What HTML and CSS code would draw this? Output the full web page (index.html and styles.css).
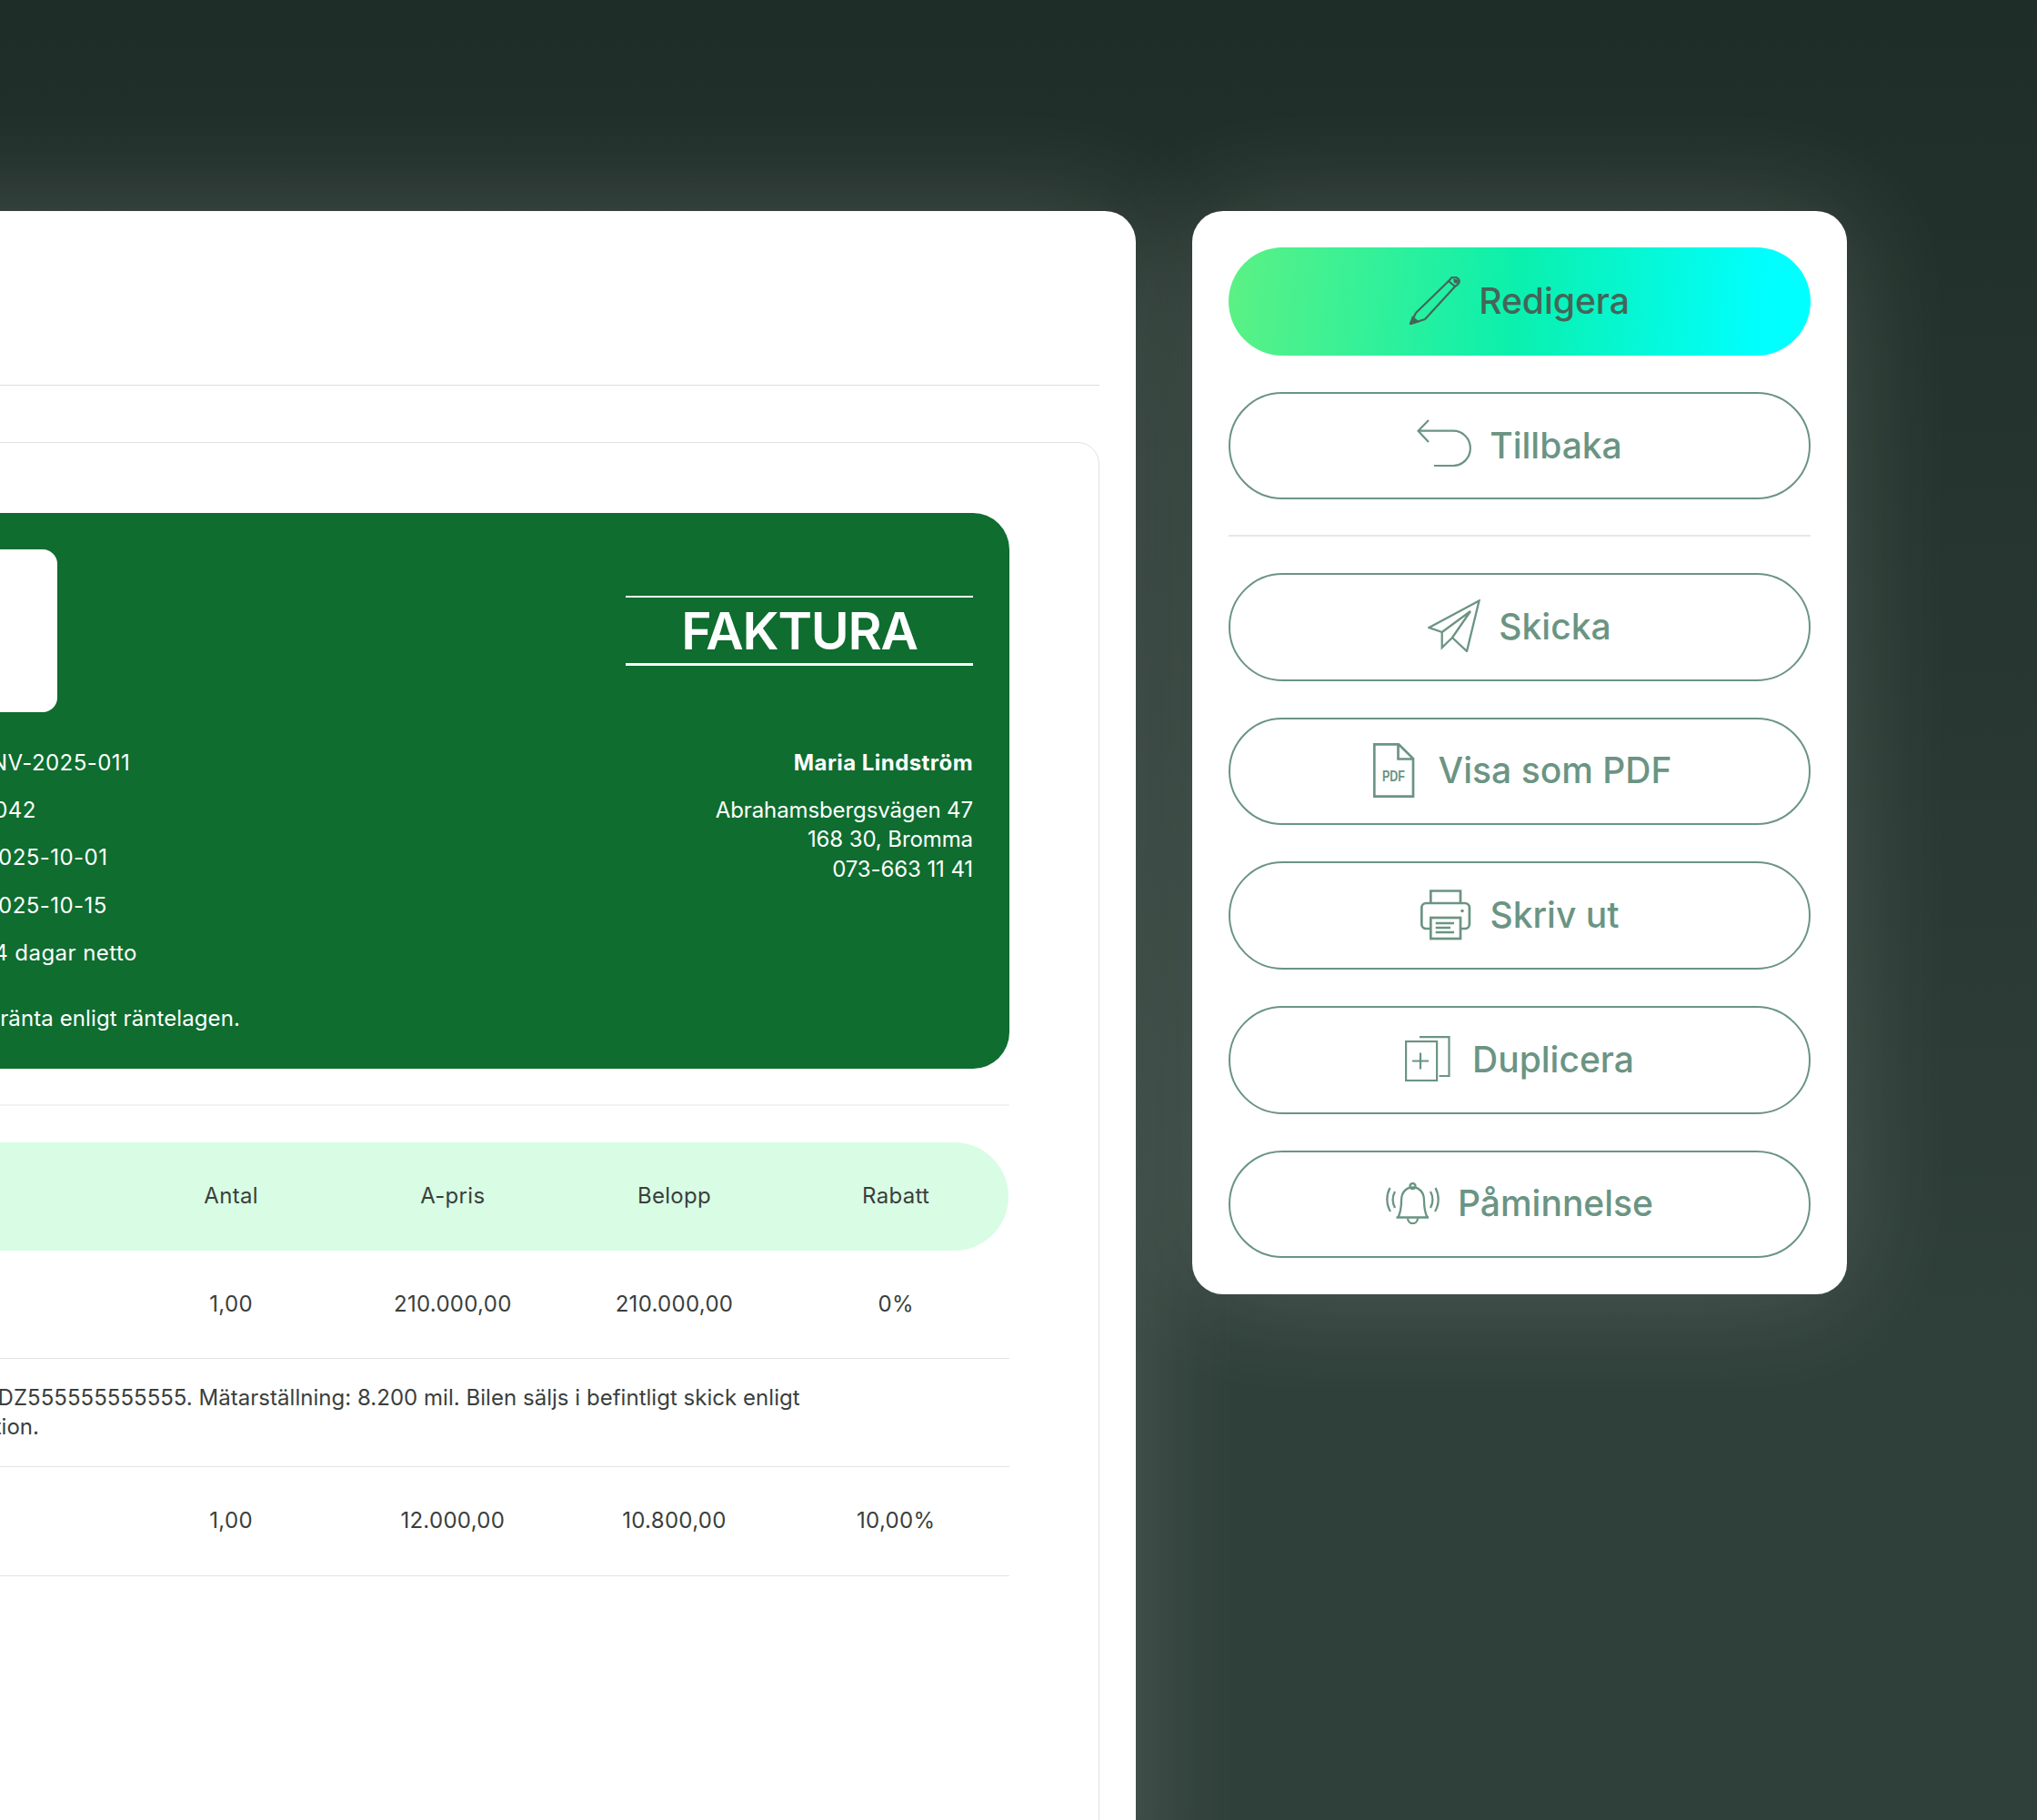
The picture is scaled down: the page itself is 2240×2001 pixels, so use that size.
FILE: index.html
```html
<!DOCTYPE html>
<html lang="sv">
<head>
<meta charset="utf-8">
<title>Faktura</title>
<link rel="stylesheet" href="styles.css">
</head>
<body>
<div class="page">
  <main class="main-card">
    <div class="main-head"></div>
    <section class="doc">
      <div class="banner">
        <div class="banner-top">
          <div class="logo"></div>
          <h1 class="title">FAKTURA</h1>
        </div>
        <div class="banner-body">
          <div class="meta">
            <div class="meta-row"><span class="meta-label">Fakturanr</span><span>INV-2025-011</span></div>
            <div class="meta-row"><span class="meta-label">Kundnr</span><span>1042</span></div>
            <div class="meta-row"><span class="meta-label">Datum</span><span>2025-10-01</span></div>
            <div class="meta-row"><span class="meta-label">Förfallo</span><span>2025-10-15</span></div>
            <div class="meta-row"><span class="meta-label">Villkor</span><span>14 dagar netto</span></div>
            <div class="meta-row meta-note"><span>Dröjsmålsränta enligt räntelagen.</span></div>
          </div>
          <address class="customer">
            <strong class="customer-name">Maria Lindström</strong>
            <span>Abrahamsbergsvägen 47</span>
            <span>168 30, Bromma</span>
            <span>073-663 11 41</span>
          </address>
        </div>
      </div>
      <div class="rule"></div>
      <div class="table">
        <div class="row row-head"><span></span><span>Antal</span><span>A-pris</span><span>Belopp</span><span>Rabatt</span></div>
        <div class="row"><span></span><span>1,00</span><span>210.000,00</span><span>210.000,00</span><span>0%</span></div>
        <div class="row-desc"><p>VIN: WDZ555555555555. Mätarställning: 8.200 mil. Bilen säljs i befintligt skick enligt<br>inspektion.</p></div>
        <div class="row"><span></span><span>1,00</span><span>12.000,00</span><span>10.800,00</span><span>10,00%</span></div>
      </div>
    </section>
  </main>

  <aside class="actions">
    <button class="btn btn-primary" type="button">
      <svg class="ico ico-pencil" viewBox="0 0 56 53" fill="none" stroke="currentColor" stroke-width="2.200"><path d="M7 40 43 5M17 47 50 11M7 40 1 52 17 47"/><path d="M1 52 3.500 45 9 49.500Z" fill="currentColor"/><path d="M43 5 46 1.500C48 0 52 .5 54 3 56 6 54 8.500 50 11Z"/><path d="M48 2 54 4 53 8 49 7Z" fill="currentColor" stroke="none"/></svg>
      <span>Redigera</span>
    </button>
    <button class="btn" type="button">
      <svg class="ico ico-back" viewBox="0 0 60 52" fill="none" stroke="currentColor" stroke-width="2.200"><path d="M13 1 1.500 12.700 13 25M1.500 12.700H40A18.700 19 0 0 1 40 51H19"/></svg>
      <span>Tillbaka</span>
    </button>
    <div class="actions-rule"></div>
    <button class="btn" type="button">
      <svg class="ico ico-send" viewBox="0 0 58 58" fill="none" stroke="currentColor" stroke-width="2.300"><path d="M56.500 1.500 1.500 31 15.700 36V53L27 42 43 57ZM15.700 36 47 13 27 42"/></svg>
      <span>Skicka</span>
    </button>
    <button class="btn" type="button">
      <svg class="ico ico-pdf" viewBox="0 0 52 60" fill="none" stroke="currentColor" stroke-width="2.700"><path d="M1.300 1.300H28L44 17V58.700H1.300ZM27.500 1.300V17.500H44"/><text class="pdf-label" x="10" y="42" font-size="16" textLength="25" lengthAdjust="spacingAndGlyphs">PDF</text></svg>
      <span>Visa som PDF</span>
    </button>
    <button class="btn" type="button">
      <svg class="ico ico-print" viewBox="0 0 57 56" fill="none" stroke="currentColor" stroke-width="2.700"><path d="M11.300 15V1.500H44V15"/><rect x="1.300" y="15" width="52.600" height="28" rx="5"/><rect x="11.300" y="31" width="32.700" height="23" fill="#fff"/><path d="M16.700 37H37M16.700 42H33M16.700 47H37"/><circle cx="46" cy="23.500" r="1.800" fill="currentColor" stroke="none"/></svg>
      <span>Skriv ut</span>
    </button>
    <button class="btn" type="button">
      <svg class="ico ico-dup" viewBox="0 0 54 50" fill="none" stroke="currentColor" stroke-width="2.200"><rect x="1.100" y="6" width="34" height="43"/><path d="M16 1.200H48.500V44H37.500M17 18.500V36.500M8 27.500H26"/></svg>
      <span>Duplicera</span>
    </button>
    <button class="btn" type="button">
      <svg class="ico ico-bell" viewBox="0 0 59 46" fill="none" stroke="currentColor" stroke-width="2.300"><path d="M11.500 38.500H47M13.500 38.500C16 33 17 27 17 20 17 11 22 5.500 29.500 5.500S42 11 42 20C42 27 43 33 45.500 38.500"/><circle cx="29.500" cy="4" r="3"/><path d="M24 39.500C24.500 47 34.500 47 35 39.500"/><path d="M4.500 6C.2 14 .2 24 5 32M10 10C6.800 16 6.800 22 10 28M54.500 6C58.800 14 58.800 24 54 32M49 10C52.200 16 52.200 22 49 28"/></svg>
      <span>Påminnelse</span>
    </button>
  </aside>
</div>
</body>
</html>
```
FILE: styles.css
```css
* { box-sizing: border-box; }
html, body { margin: 0; height: 2001px; overflow: hidden; }
body {
  background: linear-gradient(180deg, #1f2d28 0, #25342e 500px, #2f3f39 1500px, #2f3f39 100%);
  font-family: Inter, "Liberation Sans", sans-serif;
  color: #3a3f3d;
}
.page {
  display: flex;
  align-items: flex-start;
  gap: 62px;
  width: 2600px;
  height: 2001px;
  margin-left: -360px;
  padding-top: 232px;
  overflow: hidden;
}
.main-card {
  flex: 0 0 1609px;
  height: 1900px;
  padding: 0 40px;
  background: #fff;
  border-radius: 34px;
  box-shadow: 0 0 130px rgba(255, 255, 255, .16);
}
.main-head { height: 192px; border-bottom: 1.5px solid #dcdedd; }
.doc {
  height: 1600px;
  margin-top: 62px;
  padding: 77px 98px 0;
  border: 1.5px solid #dfe1e0;
  border-radius: 24px;
}
.banner {
  padding: 40px 40px 39px;
  background: #0e6d2f;
  border-radius: 40px;
  color: #fff;
  font-size: 24px;
  line-height: 32.4px;
}
.banner-top { display: flex; justify-content: space-between; align-items: center; }
.logo { width: 244px; height: 178.5px; background: #fff; border-radius: 16px; }
.title {
  width: 382px;
  margin: 1px 0 0;
  padding: 8px 0 6px;
  border-top: 2px solid #fff;
  border-bottom: 3px solid #fff;
  font-size: 57px;
  font-weight: 600;
  letter-spacing: -1.2px;
  line-height: 58px;
  text-align: center;
}
.banner-body { display: flex; justify-content: space-between; margin-top: 40px; }
.meta { display: flex; flex-direction: column; gap: 20px; letter-spacing: .45px; }
.meta-row { display: flex; white-space: nowrap; }
.meta-label { flex: 0 0 164px; }
.meta-note { margin: 19px 0 0 68.5px; letter-spacing: .1px; }
.customer {
  display: flex;
  flex-direction: column;
  text-align: right;
  font-style: normal;
  letter-spacing: -.1px;
}
.customer-name { margin-bottom: 20px; font-weight: 700; letter-spacing: .45px; }
.rule { height: 1.5px; margin: 39.5px 0 40px; background: #f1f2f1; }
.table { font-size: 24px; line-height: 32px; letter-spacing: .3px; }
.row {
  display: grid;
  grid-template-columns: 1fr repeat(4, 243.7px);
  align-items: center;
  height: 119.2px;
  padding-right: 3px;
  border-bottom: 1.5px solid #e3e4e4;
  text-align: center;
}
.row-head {
  height: 119px;
  margin-right: 1.5px;
  padding-right: 1.5px;
  background: #d8fde4;
  border: 0;
  border-radius: 60px;
}
.row-desc {
  display: flex;
  align-items: center;
  height: 119.2px;
  padding-left: 140px;
  border-bottom: 1.5px solid #e3e4e4;
  white-space: nowrap;
  letter-spacing: .03px;
}
.row-desc p { margin: 0; }
.actions {
  flex: 0 0 720px;
  display: flex;
  flex-direction: column;
  gap: 40px;
  padding: 40px;
  background: #fff;
  border-radius: 34px;
  box-shadow: 0 0 130px rgba(255, 255, 255, .16);
}
.actions-rule { height: 1.5px; margin-top: -1px; background: #e6e6e6; }
.btn {
  display: flex;
  justify-content: center;
  align-items: center;
  gap: 20px;
  width: 640px;
  height: 118.7px;
  padding: 0 0 2px;
  background: #fff;
  border: 2.5px solid #6b9483;
  border-radius: 60px;
  color: #6b9483;
  font: 500 39px/1 Inter, "Liberation Sans", sans-serif;
}
.btn-primary {
  background: linear-gradient(95deg, #5cf184 0, #0af0ae 50%, #00ffff 92%);
  border: 0;
  color: #456558;
}
.ico { flex: none; display: block; }
.ico-pencil { width: 56px; height: 53px; }
.ico-back { width: 60px; height: 52px; margin-bottom: 5px; }
.ico-send { width: 58px; height: 58px; }
.ico-pdf { width: 52px; height: 60px; margin-left: 6px; }
.ico-print { width: 57px; height: 56px; }
.ico-dup { width: 54px; height: 50px; }
.ico-bell { width: 59px; height: 46px; }
.pdf-label { fill: currentColor; stroke: none; font-family: "Liberation Sans", sans-serif; font-weight: 700; }
```
